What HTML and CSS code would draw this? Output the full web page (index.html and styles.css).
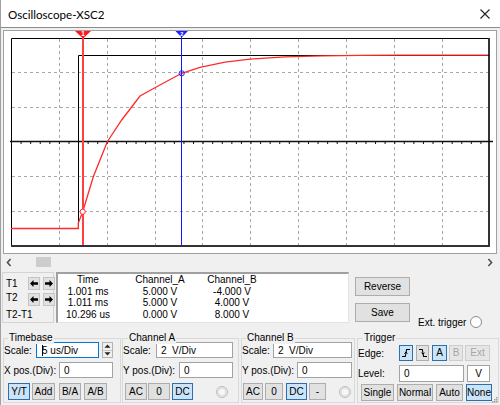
FILE: index.html
```html
<!DOCTYPE html>
<html>
<head>
<meta charset="utf-8">
<link rel="stylesheet" href="styles.css">
</head>
<body>
<div class="win">
  <div class="titlebar">
    <span class="title">Oscilloscope-XSC2</span>
    <svg class="close" width="10" height="10" viewBox="0 0 10 10"><path d="M0.5 0.5L9.5 9.5M9.5 0.5L0.5 9.5" stroke="#222" stroke-width="1.1"/></svg>
  </div>

  <div class="scope">
    <svg class="plot" width="492" height="222" viewBox="4 31 492 222">
      <g stroke="#a8a8a8" stroke-width="1" stroke-dasharray="3 3" fill="none">
        <path d="M59.5 39V245M107.5 39V245M155.5 39V245M202.5 39V245M250.5 39V245M298.5 39V245M346.5 39V245M394.5 39V245M442.5 39V245"/>
        <path d="M12 72.5H488M12 107.5H488M12 176.5H488M12 211.5H488"/>
      </g>
      <path d="M11.5 246V38.5H490" stroke="#000" stroke-width="1" fill="none"/>
      <rect x="488" y="38" width="2" height="209" fill="#333"/>
      <rect x="11" y="245" width="479" height="2" fill="#333"/>
      <path d="M10 141.5H493" stroke="#111" stroke-width="1.3"/>
      <path d="M11 143H490" stroke="#111" stroke-width="2" stroke-dasharray="1 8.58"/>
      <polyline points="11,228.5 78.5,228.5 78.5,55.5 489,55.5" fill="none" stroke="#000" stroke-width="1"/>
      <polyline points="11,228.5 78.3,228.5 78.3,223 82.7,211.7 93.3,176.7 107.3,141.7 121.7,120 140,96 156.7,86.7 181.7,73.3 200,67.3 225,62.1 250,59.1 285,56.9 322,55.8 360,55.3 400,55.2 488,55.2" fill="none" stroke="#ff2a2a" stroke-width="1.3"/>
      <path d="M83 31V245" stroke="#ff4040" stroke-width="2"/>
      <path d="M181.5 31V245" stroke="#1818ff" stroke-width="1"/>
      <polygon points="75,31 91,31 83,38.5" fill="#ff1a1a"/>
      <text x="83" y="36" font-size="6.5" font-weight="bold" fill="#fff" text-anchor="middle" font-family="Liberation Sans, Arial, sans-serif">1</text>
      <polygon points="175.5,31 188,31 181.7,37.5" fill="#2020ff"/>
      <text x="181.7" y="35.6" font-size="5.5" font-weight="bold" fill="#fff" text-anchor="middle" font-family="Liberation Sans, Arial, sans-serif">2</text>
      <circle cx="82.7" cy="211.7" r="2.6" fill="#fff" stroke="#ff2a2a" stroke-width="1"/>
      <circle cx="181.7" cy="73.3" r="2.6" fill="none" stroke="#2020ff" stroke-width="1"/>
    </svg>
  </div>

  <div class="hscroll">
    <svg class="chev" width="6" height="9" viewBox="0 0 6 9"><path d="M4.6 1L1.4 4.5L4.6 8" fill="none" stroke="#505050" stroke-width="1.6"/></svg>
    <div class="thumb"></div>
    <svg class="chev chev-r" width="6" height="9" viewBox="0 0 6 9"><path d="M1.4 1L4.6 4.5L1.4 8" fill="none" stroke="#505050" stroke-width="1.6"/></svg>
  </div>

  <div class="readout">
    <div class="tbox">
      <span class="tl">T1</span>
      <span class="abtn"><svg width="10" height="9" viewBox="0 0 10 9"><path d="M1 4.5L4.5 1V3.3H9V5.7H4.5V8Z" fill="#000"/></svg></span>
      <span class="abtn"><svg width="10" height="9" viewBox="0 0 10 9"><path d="M9 4.5L5.5 1V3.3H1V5.7H5.5V8Z" fill="#000"/></svg></span>
      <span class="tl t2">T2</span>
      <span class="abtn"><svg width="10" height="9" viewBox="0 0 10 9"><path d="M1 4.5L4.5 1V3.3H9V5.7H4.5V8Z" fill="#000"/></svg></span>
      <span class="abtn"><svg width="10" height="9" viewBox="0 0 10 9"><path d="M9 4.5L5.5 1V3.3H1V5.7H5.5V8Z" fill="#000"/></svg></span>
      <span class="tl t21">T2-T1</span>
    </div>
    <div class="data">
      <span>Time</span><span>Channel_A</span><span>Channel_B</span>
      <span>1.001 ms</span><span>5.000 V</span><span>-4.000 V</span>
      <span>1.011 ms</span><span>5.000 V</span><span>4.000 V</span>
      <span>10.296 us</span><span>0.000 V</span><span>8.000 V</span>
    </div>
    <div class="rbtns">
      <div class="btn big">Reverse</div>
      <div class="btn big save">Save</div>
    </div>
    <div class="ext">
      <span>Ext. trigger</span>
      <span class="radio"></span>
    </div>
  </div>

  <div class="groups">
    <div class="grp g-tb">
      <span class="legend">Timebase</span>
      <div class="row r1">
        <span class="lbl">Scale:</span>
        <div class="field focus w63"><span class="caret"></span>5 us/Div</div>
        <div class="spin">
          <span class="sp"><svg width="7" height="4" viewBox="0 0 7 4"><path d="M0.5 3.8L3.5 0.5L6.5 3.8Z" fill="#222"/></svg></span>
          <span class="sp"><svg width="7" height="4" viewBox="0 0 7 4"><path d="M0.5 0.2L3.5 3.5L6.5 0.2Z" fill="#222"/></svg></span>
        </div>
      </div>
      <div class="row r2">
        <span class="lbl">X pos.(Div):</span>
        <div class="field w54">0</div>
      </div>
      <div class="row r3">
        <div class="btn sel" style="width:22px;margin-left:4px">Y/T</div>
        <div class="btn" style="width:23px;margin-left:2px">Add</div>
        <div class="btn" style="width:22px;margin-left:4px">B/A</div>
        <div class="btn" style="width:23px;margin-left:3px">A/B</div>
      </div>
    </div>

    <div class="grp g-ca">
      <span class="legend">Channel A</span>
      <div class="row r1">
        <span class="lbl">Scale:</span>
        <div class="field w77">2&nbsp; V/Div</div>
      </div>
      <div class="row r2">
        <span class="lbl">Y pos.(Div):</span>
        <div class="field w54">0</div>
      </div>
      <div class="row r3">
        <div class="btn" style="width:22px;margin-left:2px">AC</div>
        <div class="btn" style="width:22px;margin-left:1px">0</div>
        <div class="btn sel" style="width:21px;margin-left:2px">DC</div>
        <span class="radio dis" style="margin-left:23px"></span>
      </div>
    </div>

    <div class="grp g-cb">
      <span class="legend">Channel B</span>
      <div class="row r1">
        <span class="lbl">Scale:</span>
        <div class="field w79">2&nbsp; V/Div</div>
      </div>
      <div class="row r2">
        <span class="lbl">Y pos.(Div):</span>
        <div class="field w55">0</div>
      </div>
      <div class="row r3">
        <div class="btn" style="width:20px;margin-left:1px">AC</div>
        <div class="btn" style="width:18px;margin-left:2px">0</div>
        <div class="btn sel" style="width:21px;margin-left:3px">DC</div>
        <div class="btn" style="width:17px;margin-left:2px">-</div>
        <span class="radio dis" style="margin-left:13px"></span>
      </div>
    </div>

    <div class="grp g-tr">
      <span class="legend">Trigger</span>
      <div class="row t1">
        <span class="lbl">Edge:</span>
        <div class="btn sel" style="width:14px"><svg width="10" height="10" viewBox="0 0 10 10"><path d="M1 8.5H4.3L5.6 1.5H9" fill="none" stroke="#000" stroke-width="1.1"/><path d="M3.4 5.6L5 4L6.4 5.6" fill="none" stroke="#000" stroke-width="1"/></svg></div>
        <div class="btn" style="width:13px;margin-left:3px"><svg width="10" height="10" viewBox="0 0 10 10"><path d="M1 1.5H4.3L5.6 8.5H9" fill="none" stroke="#000" stroke-width="1.1"/><path d="M3.6 4.6L5 6.2L6.6 4.6" fill="none" stroke="#000" stroke-width="1"/></svg></div>
        <div class="btn sel" style="width:15px;margin-left:3px">A</div>
        <div class="btn dis" style="width:14px;margin-left:2px">B</div>
        <div class="btn dis" style="width:25px;margin-left:2px">Ext</div>
      </div>
      <div class="row t2r">
        <span class="lbl">Level:</span>
        <div class="field w65">0</div>
        <div class="field vbox">V</div>
      </div>
      <div class="row t3">
        <div class="btn" style="width:33px;margin-left:3px">Single</div>
        <div class="btn" style="width:36px;margin-left:3px">Normal</div>
        <div class="btn" style="width:27px;margin-left:3px">Auto</div>
        <div class="btn sel" style="width:26px;margin-left:3px">None</div>
      </div>
    </div>
  </div>

  <svg class="grip" width="6" height="6" viewBox="0 0 6 6"><g fill="#a0a0a0"><rect x="4" y="0" width="1.5" height="1.5"/><rect x="2" y="2" width="1.5" height="1.5"/><rect x="4" y="2" width="1.5" height="1.5"/><rect x="0" y="4" width="1.5" height="1.5"/><rect x="2" y="4" width="1.5" height="1.5"/><rect x="4" y="4" width="1.5" height="1.5"/></g></svg>
</div>
</body>
</html>
```

FILE: styles.css
```css
* { box-sizing: border-box; }
html, body { margin: 0; padding: 0; }
body {
  width: 500px;
  height: 405px;
  overflow: hidden;
  background: #f0f0f0;
  font-family: "Liberation Sans", Arial, sans-serif;
  font-size: 10px;
  color: #000;
}
.win {
  position: relative;
  width: 500px;
  height: 405px;
  display: flex;
  flex-direction: column;
  background: #f0f0f0;
  border-left: 1px solid #a0a0a0;
}
.titlebar {
  flex: none;
  height: 28px;
  background: #fff;
  border-bottom: 1px solid #8c8c8c;
  display: flex;
  align-items: center;
  padding-left: 7px;
}
.title {
  font-family: "Lato", "Liberation Sans", sans-serif;
  font-size: 11.6px;
  color: #000;
  padding-top: 1px;
}
.close { margin-left: auto; margin-right: 10px; }

.scope {
  flex: none;
  margin: 2px 0 0 2px;
  width: 494px;
  height: 224px;
  border: 1px solid #a0a0a0;
  background: #fff;
}
.plot { display: block; }

.hscroll {
  flex: none;
  height: 16px;
  display: flex;
  align-items: center;
  padding-left: 5px;
}
.chev { display: block; }
.thumb {
  width: 15px;
  height: 10px;
  background: #cdcdcd;
  margin-left: 24px;
}
.chev-r { margin-left: auto; margin-right: 7px; }

.readout {
  flex: none;
  height: 51px;
  margin-top: 2px;
  display: flex;
}
.tbox {
  margin-left: 1px;
  width: 52px;
  height: 51px;
  border: 1px solid #d4d4d4;
  padding: 4px 0 0 3px;
  display: grid;
  grid-template-columns: 19px 12px 12px;
  grid-template-rows: 13px 13px 12px;
  column-gap: 3px;
  row-gap: 3px;
}
.tl { line-height: 13px; }
.t2 { align-self: start; line-height: 9px; }
.t21 { grid-column: 1 / 4; line-height: 12px; }
.abtn {
  background: #e1e1e1;
  border: 1px solid #c4c4c4;
  display: flex;
  align-items: center;
  justify-content: center;
}
.abtn svg { display: block; }
.data {
  margin-left: 2px;
  width: 293px;
  height: 51px;
  background: #fff;
  border-top: 2px solid #a0a0a0;
  border-left: 2px solid #a0a0a0;
  border-right: 1px solid #e3e3e3;
  border-bottom: 1px solid #e3e3e3;
  display: grid;
  grid-template-columns: 60px 84px 60px;
  align-content: start;
  line-height: 11.7px;
  text-align: center;
  white-space: nowrap;
}
.rbtns {
  margin-left: 6px;
  width: 55px;
  display: flex;
  flex-direction: column;
}
.btn {
  flex: none;
  height: 17px;
  background: #e1e1e1;
  border: 1px solid #adadad;
  display: flex;
  align-items: center;
  justify-content: center;
  white-space: nowrap;
  line-height: 12px;
}
.btn svg { display: block; }
.btn.big { height: 19px; margin-top: 5px; }
.btn.save { margin-top: 7px; }
.btn.sel { background: #cce4f7; border-color: #2c6fb0; }
.btn.dis { color: #a6a6a6; background: #e6e6e6; border-color: #cdcdcd; }
.ext {
  margin-left: 8px;
  margin-top: 44px;
  height: 12px;
  display: flex;
  align-items: center;
  gap: 4px;
  white-space: nowrap;
}
.radio {
  flex: none;
  width: 12px;
  height: 12px;
  border-radius: 50%;
  border: 1px solid #8a8a8a;
  background: #fff;
}
.radio.dis {
  border-color: #bcbcbc;
  background: #f7f7f7;
  box-shadow: inset 0 0 0 2px #e2e2e2;
}

.groups {
  flex: none;
  margin-top: 15px;
  height: 65px;
  display: flex;
}
.grp {
  position: relative;
  height: 65px;
  border: 1px solid #d9d9d9;
}
.g-tb { margin-left: 2px; width: 118px; }
.g-ca { margin-left: 1px; width: 117px; }
.g-cb { margin-left: 2px; width: 114px; }
.g-tr { margin-left: 2px; width: 142px; }
.legend {
  position: absolute;
  top: -7px;
  left: 4px;
  padding: 0 1px;
  background: #f0f0f0;
  line-height: 12px;
}
.g-ca .legend { left: 5px; }
.g-tr .legend { left: 5px; }
.row {
  display: flex;
  align-items: center;
  white-space: nowrap;
}
.r1 { height: 16px; margin-top: 3px; }
.r2 { height: 16px; margin-top: 4px; }
.r3 { height: 17px; margin-top: 5px; }
.t1 { height: 16px; margin-top: 6px; }
.t2r { height: 17px; margin-top: 4px; }
.t3 { height: 17px; margin-top: 2px; }
.lbl { flex: none; }
.g-tb .r1 .lbl { width: 32px; }
.g-tb .r2 .lbl { width: 55px; }
.g-ca .r1 .lbl { width: 33px; }
.g-ca .r2 .lbl { width: 56px; }
.g-cb .r1 .lbl { width: 31px; }
.g-cb .r2 .lbl { width: 55px; }
.g-tr .lbl { width: 41px; }
.g-tr .t1 .btn { height: 16px; }
.field {
  flex: none;
  height: 16px;
  background: #fff;
  border: 1px solid #a2a2a2;
  display: flex;
  align-items: center;
  padding-left: 4px;
  white-space: nowrap;
}
.field.focus { border-color: #0078d7; padding-left: 5px; }
.caret {
  display: inline-block;
  width: 1px;
  height: 11px;
  background: #000;
  margin-right: -1px;
}
.w54 { width: 54px; }
.w55 { width: 55px; }
.w63 { width: 63px; }
.w65 { width: 65px; height: 17px; }
.w77 { width: 77px; }
.w79 { width: 79px; }
.vbox {
  width: 23px;
  height: 17px;
  margin-left: 3px;
  padding-left: 0;
  justify-content: center;
}
.spin {
  flex: none;
  margin-left: 3px;
  width: 11px;
  height: 16px;
  border: 1px solid #b4b4b4;
  background: #f0f0f0;
  display: flex;
  flex-direction: column;
}
.sp {
  flex: 1;
  display: flex;
  align-items: center;
  justify-content: center;
}
.sp + .sp { border-top: 1px solid #c8c8c8; }
.sp svg { display: block; }
.grip {
  position: absolute;
  right: 2px;
  bottom: 2px;
}
```
